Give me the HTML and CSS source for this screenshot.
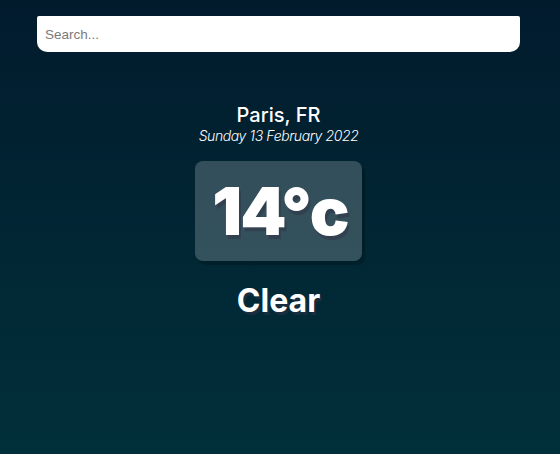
FILE: index.html
```html
<!DOCTYPE html>
<html lang="en">
<head>
<meta charset="utf-8">
<title>Weather</title>
<link rel="stylesheet" href="styles.css">
</head>
<body>
<main class="app">
  <div class="search-box">
    <input type="text" class="search-bar" placeholder="Search...">
  </div>
  <section class="location-box">
    <div class="location">Paris, FR</div>
    <div class="date">Sunday 13 February 2022</div>
  </section>
  <section class="weather-box">
    <div class="temp">14°c</div>
    <div class="weather">Clear</div>
  </section>
</main>
</body>
</html>
```

FILE: styles.css
```css
html, body {
  margin: 0;
  height: 100%;
}
body {
  background: linear-gradient(to bottom, #011b2d 0%, #01303a 100%);
  font-family: Inter, "Noto Sans", sans-serif;
  color: #fff;
}
.app {
  min-height: 100%;
  padding: 16px 40px 0 37px;
  box-sizing: border-box;
}
.search-box {
  display: flex;
}
.search-bar {
  flex: 1;
  height: 36px;
  box-sizing: border-box;
  border: none;
  outline: none;
  background: #fff;
  border-radius: 2px 2px 10px 10px;
  padding: 0 8px;
  font-family: Arial, "Liberation Sans", sans-serif;
  font-size: 13.5px;
  color: #313131;
}
.search-bar::placeholder {
  color: #7a7a7a;
}
.location-box {
  display: flex;
  flex-direction: column;
  align-items: center;
  margin-top: 51px;
}
.location {
  font-size: 20px;
  font-weight: 500;
  line-height: 24px;
}
.date {
  font-size: 14px;
  font-weight: 300;
  font-style: italic;
  line-height: 18px;
  letter-spacing: -0.4px;
}
.weather-box {
  display: flex;
  flex-direction: column;
  align-items: center;
  margin-top: 16px;
}
.temp {
  background: rgba(255, 255, 255, 0.2);
  border-radius: 8px;
  padding: 0 14px 0 17px;
  height: 100px;
  display: flex;
  align-items: center;
  font-size: 66px;
  font-weight: 900;
  letter-spacing: -2px;
  text-shadow: 2px 4px rgba(50, 50, 70, 0.5);
  box-shadow: 3px 4px rgba(0, 0, 0, 0.2);
}
.weather {
  margin-top: 20px;
  font-size: 32px;
  font-weight: 700;
  line-height: 40px;
  text-shadow: 2px 3px rgba(50, 50, 70, 0.5);
}
```
